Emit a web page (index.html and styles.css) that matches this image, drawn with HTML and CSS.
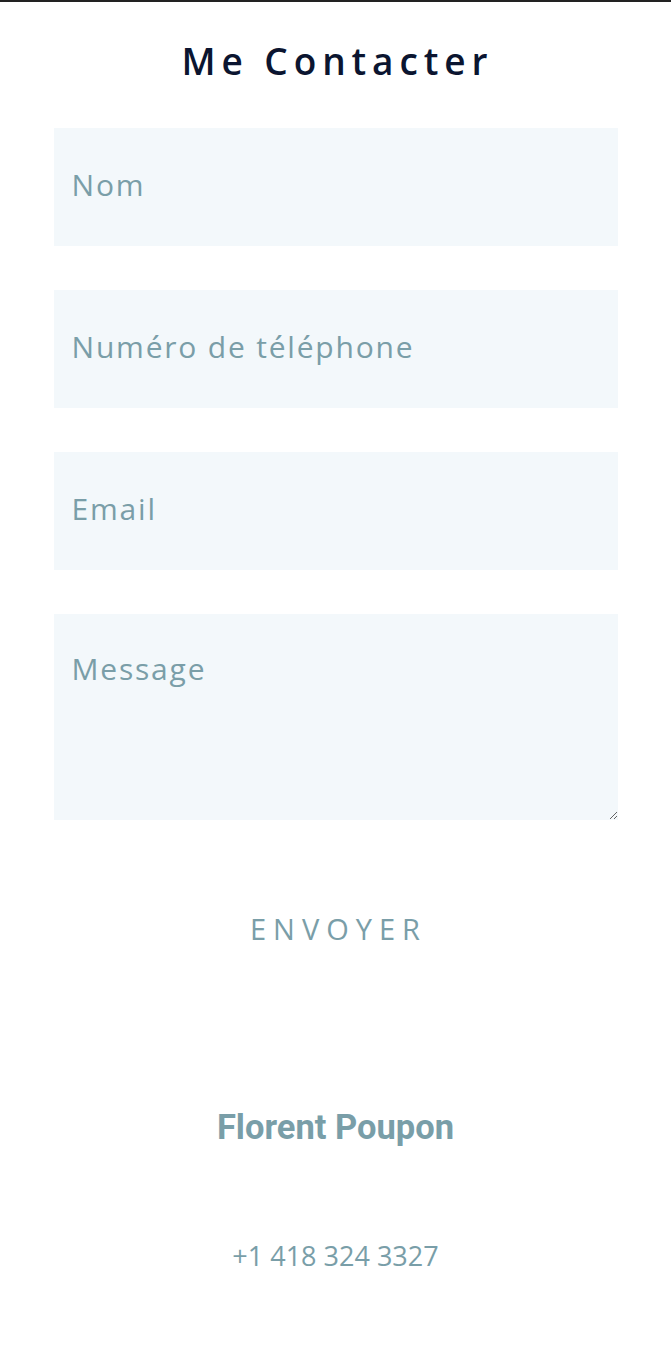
FILE: index.html
```html
<!DOCTYPE html>
<html lang="fr">
<head>
<meta charset="utf-8">
<title>Me Contacter</title>
<link rel="stylesheet" href="styles.css">
</head>
<body>
<div class="topbar"></div>
<main class="page">
  <h1 class="title">Me Contacter</h1>
  <form class="form">
    <input class="field" type="text" placeholder="Nom">
    <input class="field" type="tel" placeholder="Numéro de téléphone">
    <input class="field" type="email" placeholder="Email">
    <textarea class="field area" placeholder="Message"></textarea>
    <button class="send" type="button">ENVOYER</button>
  </form>
  <section class="contact">
    <h2 class="name">Florent Poupon</h2>
    <p class="phone">+1 418 324 3327</p>
  </section>
</main>
</body>
</html>
```

FILE: styles.css
```css
html, body {
  margin: 0;
  padding: 0;
  background: #ffffff;
}
.topbar {
  height: 2px;
  background: #222222;
}
.page {
  width: 564px;
  margin: 0 auto;
  display: flex;
  flex-direction: column;
  align-items: stretch;
}
.title {
  margin: 0;
  height: 126px;
  display: flex;
  align-items: center;
  justify-content: center;
  padding-bottom: 10px;
  padding-left: 4px;
  box-sizing: border-box;
  font-family: "Open Sans", sans-serif;
  font-weight: 600;
  font-size: 37px;
  letter-spacing: 5.9px;
  color: #0b1530;
}
.form {
  display: flex;
  flex-direction: column;
  gap: 44px;
}
.field {
  display: block;
  width: 100%;
  height: 118px;
  box-sizing: border-box;
  border: none;
  outline: none;
  background: #f3f8fb;
  padding: 0 18px 5px;
  font-family: "Open Sans", sans-serif;
  font-weight: 400;
  font-size: 30px;
  letter-spacing: 1.8px;
  color: #7a9ea8;
}
.field::placeholder {
  color: #7a9ea8;
  opacity: 1;
}
.area {
  height: 206px;
  padding-top: 34px;
  resize: vertical;
}
.send {
  align-self: center;
  margin-top: 39px;
  padding: 0 0 0 6px;
  background: none;
  border: none;
  height: 50px;
  font-family: "Open Sans", sans-serif;
  font-weight: 400;
  font-size: 29px;
  letter-spacing: 7px;
  color: #7a9ea8;
}
.contact {
  display: flex;
  flex-direction: column;
  align-items: center;
  padding-top: 154px;
}
.name {
  margin: 0;
  font-family: Roboto, sans-serif;
  font-weight: 700;
  font-size: 34.5px;
  line-height: 40px;
  color: #799ea8;
}
.phone {
  margin: 93px 0 0;
  font-family: "Open Sans", sans-serif;
  font-weight: 400;
  font-size: 27px;
  line-height: 32px;
  color: #799ea8;
}
```
